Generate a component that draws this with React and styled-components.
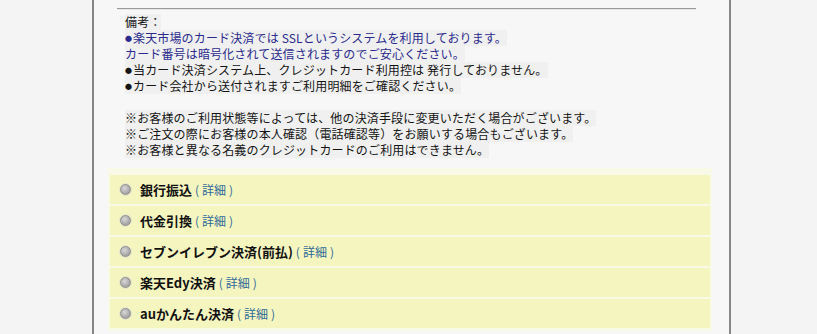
import React from "react";
import styled, { createGlobalStyle } from "styled-components";

const GlobalStyle = createGlobalStyle`
  body {
    margin: 0;
    background: #f4f4f4;
    font-family: "Noto Sans CJK JP", "Noto Sans", sans-serif;
  }
`;

const methods = [
  "銀行振込",
  "代金引換",
  "セブンイレブン決済(前払)",
  "楽天Edy決済",
  "auかんたん決済",
];

const App = () => {
  return (
    <>
      <GlobalStyle />
      <Page>
        <Gutter />
        <Panel>
          <Rule />
          <Note>
            <Line>備考：</Line>
            <Line $blue><Dot>●</Dot>楽天市場のカード決済では SSLというシステムを利用しております。</Line>
            <Line $blue>カード番号は暗号化されて送信されますのでご安心ください。</Line>
            <Line><Dot>●</Dot>当カード決済システム上、クレジットカード利用控は 発行しておりません。</Line>
            <Line><Dot>●</Dot>カード会社から送付されますご利用明細をご確認ください。</Line>
            <Blank />
            <Line>※お客様のご利用状態等によっては、他の決済手段に変更いただく場合がございます。</Line>
            <Line>※ご注文の際にお客様の本人確認（電話確認等）をお願いする場合もございます。</Line>
            <Line>※お客様と異なる名義のクレジットカードのご利用はできません。</Line>
          </Note>
          <Methods>
            {methods.map((name) => (
              <Method key={name}>
                <Radio />
                <Label>{name}</Label>
                <Detail>
                  (<DetailText>詳細</DetailText>)
                </Detail>
              </Method>
            ))}
          </Methods>
        </Panel>
      </Page>
    </>
  );
};

// スタイル
const Page = styled.div`
  display: flex;
  height: 334px;
  overflow: hidden;
`;

const Gutter = styled.div`
  width: 92px;
  flex-shrink: 0;
`;

const Panel = styled.div`
  width: 635px;
  flex-shrink: 0;
  background: #f7f7f7;
  border-left: 2px solid #868686;
  border-right: 2px solid #868686;
  padding-top: 8px;
`;

const Rule = styled.div`
  margin-left: 23px;
  width: 579px;
  height: 1px;
  background: #9a9a9a;
  box-shadow: 0 1px 0 #e6e6e6;
`;

const Note = styled.div`
  padding: 5px 0 0 31px;
  font-size: 12px;
  line-height: 16px;
`;

const Line = styled.div`
  width: fit-content;
  height: 16px;
  white-space: nowrap;
  background: #f0f0f0;
  color: ${({ $blue }) => ($blue ? "#2a2a8c" : "#141414")};
  letter-spacing: 0.15px;
`;

const Dot = styled.span`
  display: inline-block;
  width: 8px;
  font-size: 7px;
  line-height: 1;
  vertical-align: 2px;
`;

const Blank = styled.div`
  height: 16px;
`;

const Methods = styled.div`
  margin: 10px 0 0 14px;
  width: 604px;
  padding: 7px 2px 3px;
  box-sizing: border-box;
  background: #f9f9e8;
  display: flex;
  flex-direction: column;
  gap: 2px;
`;

const Method = styled.div`
  height: 29px;
  background: #f5f5bf;
  display: flex;
  align-items: center;
  padding-left: 10px;
`;

const Radio = styled.span`
  width: 9px;
  height: 9px;
  border-radius: 50%;
  border: 1px solid #8e8e8e;
  background: radial-gradient(circle at 40% 35%, #d8d8d8, #a4a4a4 70%);
  box-shadow: 0 0 0 1px #e4e4d0;
  margin-right: 9px;
  flex-shrink: 0;
`;

const Label = styled.span`
  font-size: 13px;
  font-weight: 700;
  color: #111;
`;

const Detail = styled.span`
  margin-left: 3px;
  font-size: 12px;
  color: #2f6a99;
`;

const DetailText = styled.span`
  padding: 0 3px;
`;

export default App;
